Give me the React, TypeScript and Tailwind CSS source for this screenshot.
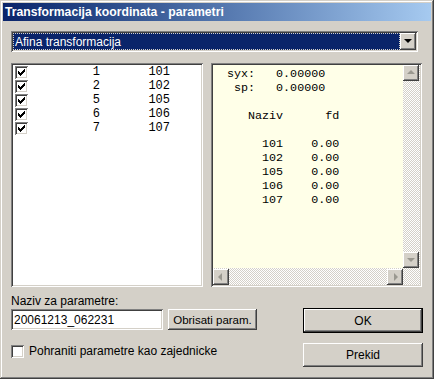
import React from 'react'

const raised =
    'bg-[#d4d0c8] shadow-[inset_-1px_-1px_#404040,inset_1px_1px_#fff,inset_-2px_-2px_#808080,inset_2px_2px_#d4d0c8]'
const sunken =
    'shadow-[inset_1px_1px_#808080,inset_-1px_-1px_#fff,inset_2px_2px_#404040,inset_-2px_-2px_#d4d0c8]'
const dither =
    'bg-[repeating-conic-gradient(#d4d0c8_0_25%,#ffffff_0_50%)] bg-[length:2px_2px]'

const Check = ({ checked }: { checked: boolean }) => (
    <span className={`block w-[13px] h-[13px] bg-white ${sunken}`}>
        {checked && (
            <svg width="13" height="13" viewBox="0 0 13 13">
                <path d="M3 5h1v1h1v1h1V6h1V5h1V4h1V3h1v3H9v1H8v1H7v1H6v1H5V9H4V8H3z" fill="#000" />
            </svg>
        )}
    </span>
)

const Arrow = ({ dir, color }: { dir: 'up' | 'down' | 'left' | 'right'; color: string }) => {
    const pts = {
        up: '4,9 8,5 12,9',
        down: '4,6 12,6 8,10',
        left: '9,4 9,12 5,8',
        right: '7,4 7,12 11,8',
    }[dir]
    return (
        <svg width="16" height="16" viewBox="0 0 16 16">
            <polygon points={pts} fill={color} />
        </svg>
    )
}

const ScrollBtn = ({ dir }: { dir: 'up' | 'down' | 'left' | 'right' }) => (
    <div className={`w-[16px] h-[16px] shrink-0 ${raised}`}>
        <Arrow dir={dir} color="#9a9890" />
    </div>
)

const rows = [
    ['1', '101'],
    ['2', '102'],
    ['5', '105'],
    ['6', '106'],
    ['7', '107'],
]

const report = [
    'syx:   0.00000',
    ' sp:   0.00000',
    '',
    '   Naziv      fd',
    '',
    '     101    0.00',
    '     102    0.00',
    '     105    0.00',
    '     106    0.00',
    '     107    0.00',
].join('\n')

const mono = { fontFamily: '"Liberation Mono", "Courier New", monospace' }

export default function App(): React.ReactElement {
    return (
        <div
            className="w-[434px] h-[379px] p-[3px] bg-[#d4d0c8] text-black text-[12px] leading-[14px] shadow-[inset_-1px_-1px_#404040,inset_1px_1px_#d4d0c8,inset_-2px_-2px_#808080,inset_2px_2px_#fff]"
            style={{ fontFamily: '"Liberation Sans", Arial, sans-serif' }}
        >
            <div className="h-[18px] flex items-center pl-[2px] bg-gradient-to-r from-[#0a246a] to-[#a6caf0] text-white font-bold text-[12.2px]">
                Transformacija koordinata - parametri
            </div>

            <div className="pl-[8px] pt-[10px]">
                <div className={`w-[407px] h-[21px] bg-white p-[2px] flex ${sunken}`}>
                    <div className="flex-1 bg-[#0a246a] text-white pl-[2px] flex items-center outline outline-1 outline-dotted outline-[#d4d0c8] -outline-offset-1">
                        Afina transformacija
                    </div>
                    <div className={`w-[16px] h-[17px] ${raised}`}>
                        <Arrow dir="down" color="#000" />
                    </div>
                </div>

                <div className="flex gap-[8px] mt-[11px]">
                    <div className={`w-[192px] h-[224px] bg-white p-[2px] ${sunken}`}>
                        {rows.map(([a, b]) => (
                            <div key={a} className="h-[14px] flex items-center pl-[2px]">
                                <Check checked />
                                <span className="w-[72px] text-right" style={mono}>
                                    {a}
                                </span>
                                <span className="w-[70px] text-right" style={mono}>
                                    {b}
                                </span>
                            </div>
                        ))}
                    </div>

                    <div className={`w-[211px] h-[224px] bg-[#ffffe8] p-[2px] ${sunken}`}>
                        <div className="h-full grid grid-cols-[1fr_17px] grid-rows-[1fr_17px]">
                            <pre className="pl-[14px] pt-[2px] text-[11.7px] leading-[14px] overflow-hidden" style={mono}>
                                {report}
                            </pre>
                            <div className={`flex flex-col ${dither}`}>
                                <ScrollBtn dir="up" />
                                <div className="flex-1" />
                                <ScrollBtn dir="down" />
                            </div>
                            <div className={`flex items-end ${dither}`}>
                                <ScrollBtn dir="left" />
                                <div className="flex-1" />
                                <ScrollBtn dir="right" />
                            </div>
                            <div className={dither} />
                        </div>
                    </div>
                </div>

                <div className="flex">
                    <div className="w-[292px]">
                        <div className="mt-[7px]">Naziv za parametre:</div>
                        <div className="flex gap-[5px] mt-[1px]">
                            <div className={`w-[152px] h-[21px] bg-white pl-[3px] flex items-center ${sunken}`}>
                                20061213_062231
                            </div>
                            <div className={`w-[89px] h-[21px] flex items-center justify-center text-[11.5px] ${raised}`}>
                                Obrisati param.
                            </div>
                        </div>
                        <div className="flex items-center gap-[5px] mt-[14px]">
                            <Check checked={false} />
                            <span>Pohraniti parametre kao zajednicke</span>
                        </div>
                    </div>
                    <div className="w-[120px] mt-[21px]">
                        <div className="h-[25px] border border-black">
                            <div className={`h-full flex items-center justify-center ${raised}`}>OK</div>
                        </div>
                        <div className={`h-[24px] mt-[10px] flex items-center justify-center ${raised}`}>
                            Prekid
                        </div>
                    </div>
                </div>
            </div>
        </div>
    )
}
